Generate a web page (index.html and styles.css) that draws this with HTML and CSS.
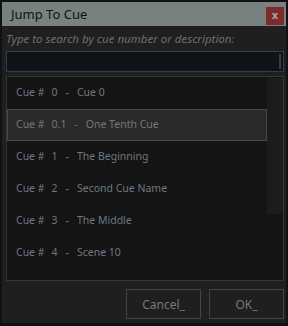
FILE: index.html
```html
<!DOCTYPE html>
<html>
<head>
    <title>Jump To Cue</title>
    <meta name="viewport" content="width=device-width, initial-scale=1.0">
    <link rel="stylesheet" href="styles.css">
</head>
<body>
    <div class="window">
        <div class="title-bar">
            <span class="title">Jump To Cue</span>
            <button class="close-btn">x</button>
        </div>
        <div class="content">
            <label class="search-label" for="search">Type to search by cue number or description:</label>
            <div class="search-box">
                <input type="text" id="search">
                <span class="search-scroll"></span>
            </div>
            <div class="cue-list">
                <ul class="cues">
                    <li class="cue"><span>Cue #</span><span class="num">0</span><span class="sep">-</span><span>Cue 0</span></li>
                    <li class="cue selected"><span>Cue #</span><span class="num">0.1</span><span class="sep">-</span><span>One Tenth Cue</span></li>
                    <li class="cue"><span>Cue #</span><span class="num">1</span><span class="sep">-</span><span>The Beginning</span></li>
                    <li class="cue"><span>Cue #</span><span class="num">2</span><span class="sep">-</span><span>Second Cue Name</span></li>
                    <li class="cue"><span>Cue #</span><span class="num">3</span><span class="sep">-</span><span>The Middle</span></li>
                    <li class="cue"><span>Cue #</span><span class="num">4</span><span class="sep">-</span><span>Scene 10</span></li>
                </ul>
                <div class="scrollbar">
                    <div class="thumb"></div>
                </div>
            </div>
            <div class="buttons">
                <button class="button">Cancel_</button>
                <button class="button">OK_</button>
            </div>
        </div>
    </div>
</body>
</html>
```

FILE: styles.css
```css
body {
    margin: 0;
    background-color: #111;
    font-family: 'Noto Sans', 'Open Sans', sans-serif;
    width: 288px;
    height: 326px;
    overflow: hidden;
}

.window {
    margin: 2px 2px 3px 2px;
    height: 321px;
    background-color: #1f1f1f;
    display: flex;
    flex-direction: column;
}

.title-bar {
    height: 28px;
    background-color: #77817f;
    display: flex;
    align-items: center;
    justify-content: space-between;
    padding: 0 2px 0 9px;
}

.title {
    font-size: 13px;
    color: #111;
}

.close-btn {
    width: 18px;
    height: 18px;
    margin-top: 4px;
    border: none;
    padding: 0;
    background-color: #7c2a2a;
    color: #a8a8a8;
    font-family: 'DejaVu Sans', sans-serif;
    font-size: 10px;
    font-weight: bold;
    line-height: 16px;
}

.content {
    flex: 1;
    display: flex;
    flex-direction: column;
    padding: 5px 2px 4px 4px;
}

.search-label {
    font-size: 11.5px;
    font-style: italic;
    color: #6c6f71;
    line-height: 16px;
}

.search-box {
    margin-top: 4px;
    height: 19px;
    border: 1px solid #22415a;
    background-color: #101216;
    display: flex;
    justify-content: flex-end;
}

.search-box input {
    flex: 1;
    border: none;
    background: transparent;
    outline: none;
}

.search-scroll {
    width: 2px;
    margin: 2px 2px 2px 0;
    background-color: #3a3c3e;
}

.cue-list {
    margin-top: 4px;
    height: 203px;
    border: 1px solid #363636;
    background-color: #141414;
    display: flex;
}

.cues {
    list-style: none;
    margin: 0;
    padding: 0;
    flex: 1;
}

.cue {
    box-sizing: border-box;
    height: 32px;
    line-height: 29px;
    padding-left: 8px;
    font-size: 10.5px;
    color: #6e7880;
    white-space: nowrap;
    border: 1px solid transparent;
}

.cue .num {
    margin-left: 7px;
}

.cue .sep {
    margin: 0 8px 0 8px;
}

.cue.selected {
    background-color: #2a2a2a;
    border-color: #484848;
}

.scrollbar {
    width: 16px;
    padding-top: 1px;
}

.thumb {
    height: 136px;
    background-color: #1c1c1b;
}

.buttons {
    display: flex;
    justify-content: flex-end;
    gap: 8px;
    margin-top: 8px;
}

.button {
    width: 75px;
    height: 30px;
    border: 1px solid #444;
    background-color: #1f1f1f;
    color: #777;
    font-family: 'Noto Sans', 'Open Sans', sans-serif;
    font-size: 12px;
    padding: 0;
}
```
